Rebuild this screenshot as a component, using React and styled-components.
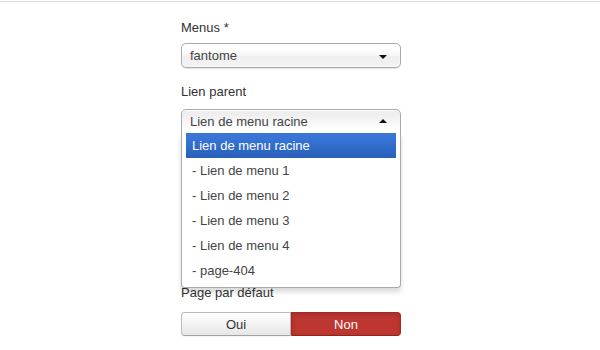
import React from "react";
import styled, { createGlobalStyle } from "styled-components";

const Global = createGlobalStyle`
  html, body { margin: 0; padding: 0; background: #fff; }
  body { font-family: "Liberation Sans", Arial, sans-serif; font-size: 13px; color: #333; }
`;

const TopBar = styled.div`
  height: 1px;
  border-bottom: 1px solid #dcdcdc;
`;

const Form = styled.div`
  width: 220px;
  margin-left: 181px;
  padding-top: 17px;
`;

const Field = styled.div`
  margin-bottom: ${(p) => p.$gap || 15}px;
`;

const Label = styled.div`
  line-height: 18px;
  color: #333;
  margin-bottom: ${(p) => p.$mb || 6}px;
`;

const Chosen = styled.div`
  position: relative;
  width: 220px;
`;

const Single = styled.div`
  box-sizing: border-box;
  display: flex;
  align-items: center;
  justify-content: space-between;
  height: 25px;
  padding: 0 13px 0 8px;
  border: 1px solid #aaa;
  border-radius: ${(p) => (p.$open ? "5px 5px 0 0" : "5px")};
  background: ${(p) =>
    p.$open
      ? "linear-gradient(#eee 20%, #fff 80%)"
      : "linear-gradient(#fff 20%, #f6f6f6 50%, #eee 52%, #f4f4f4 100%)"};
  box-shadow: ${(p) =>
    p.$open
      ? "0 1px 0 #fff inset"
      : "0 0 3px #fff inset, 0 1px 1px rgba(0,0,0,0.1)"};
  color: #444;
  line-height: 24px;
`;

const Arrow = styled.span`
  width: 0;
  height: 0;
  border-left: 4px solid transparent;
  border-right: 4px solid transparent;
  ${(p) =>
    p.$up
      ? "border-bottom: 4px solid #111; margin-top: -2px;"
      : "border-top: 4px solid #111; margin-top: 2px;"}
`;

const Drop = styled.div`
  position: absolute;
  top: 100%;
  left: 0;
  margin-top: -1px;
  z-index: 10;
  box-sizing: border-box;
  width: 100%;
  border: 1px solid #aaa;
  border-top: 0;
  border-radius: 0 0 4px 4px;
  background: #fff;
  box-shadow: 0 4px 5px rgba(0, 0, 0, 0.15);
`;

const Results = styled.ul`
  list-style: none;
  margin: 0 4px 4px 0;
  padding: 0 0 0 4px;
`;

const Item = styled.li`
  padding: 5px 6px;
  line-height: 15px;
  color: ${(p) => (p.$hl ? "#fff" : "#444")};
  background: ${(p) =>
    p.$hl ? "linear-gradient(#3875d7 20%, #2a62bc 90%)" : "transparent"};
`;

const BtnGroup = styled.div`
  display: flex;
  width: 220px;
`;

const Btn = styled.div`
  box-sizing: border-box;
  flex: 1;
  height: 24px;
  display: flex;
  align-items: center;
  justify-content: center;
  font-size: 13px;
  border: 1px solid ${(p) => (p.$danger ? "#a52a24" : "#bbb")};
  border-bottom-color: ${(p) => (p.$danger ? "#8f231e" : "#a2a2a2")};
  border-radius: ${(p) => (p.$first ? "4px 0 0 4px" : "0 4px 4px 0")};
  background: ${(p) =>
    p.$danger ? "#bd362f" : "linear-gradient(#fff, #e6e6e6)"};
  color: ${(p) => (p.$danger ? "#fff" : "#333")};
  box-shadow: ${(p) =>
    p.$danger
      ? "inset 0 2px 4px rgba(0,0,0,0.15)"
      : "inset 0 1px 0 rgba(255,255,255,0.2), 0 1px 2px rgba(0,0,0,0.05)"};
`;

const items = [
  "Lien de menu racine",
  "- Lien de menu 1",
  "- Lien de menu 2",
  "- Lien de menu 3",
  "- Lien de menu 4",
  "- page-404",
];

export default function App() {
  return (
    <>
      <Global />
      <TopBar />
      <Form>
        <Field>
          <Label>Menus *</Label>
          <Chosen>
            <Single>
              <span>fantome</span>
              <Arrow />
            </Single>
          </Chosen>
        </Field>
        <Field $gap={150}>
          <Label $mb={8}>Lien parent</Label>
          <Chosen>
            <Single $open>
              <span>Lien de menu racine</span>
              <Arrow $up />
            </Single>
            <Drop>
              <Results>
                {items.map((t, i) => (
                  <Item key={t} $hl={i === 0}>
                    {t}
                  </Item>
                ))}
              </Results>
            </Drop>
          </Chosen>
        </Field>
        <Field>
          <Label $mb={10}>Page par défaut</Label>
          <BtnGroup>
            <Btn $first>Oui</Btn>
            <Btn $danger>Non</Btn>
          </BtnGroup>
        </Field>
      </Form>
    </>
  );
}
